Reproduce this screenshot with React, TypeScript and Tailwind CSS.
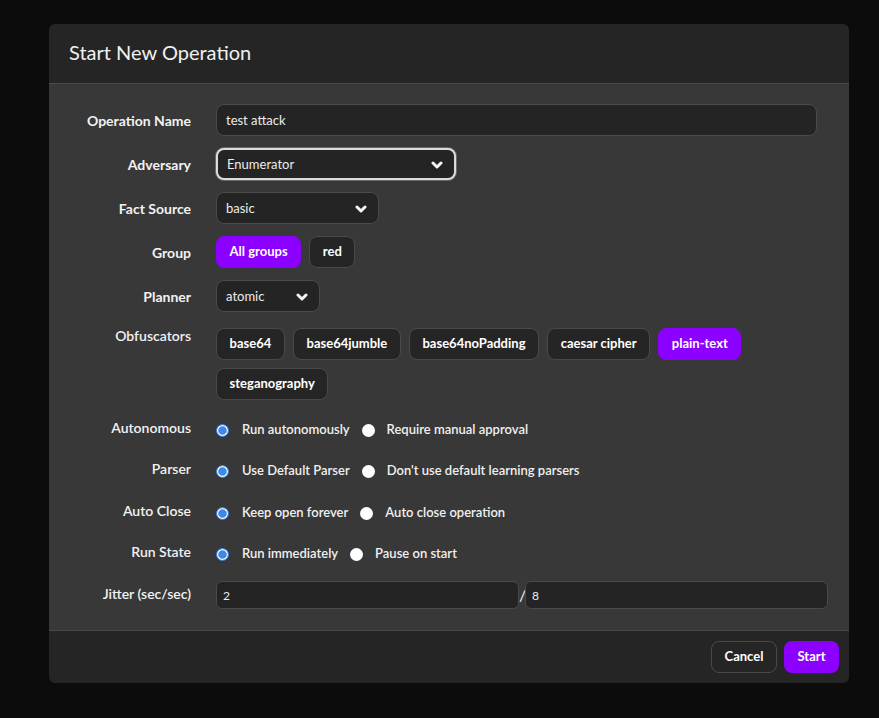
import type { ReactNode } from "react"

const obfuscators = ["base64", "base64jumble", "base64noPadding", "caesar cipher", "plain-text", "steganography"]

const radioRows = [
  { label: "Autonomous", on: "Run autonomously", off: "Require manual approval", gap: "mt-5" },
  { label: "Parser", on: "Use Default Parser", off: "Don't use default learning parsers", gap: "mt-[21px]" },
  { label: "Auto Close", on: "Keep open forever", off: "Auto close operation", gap: "mt-[22px]" },
  { label: "Run State", on: "Run immediately", off: "Pause on start", gap: "mt-[21px]" },
]

function Chevron() {
  return (
    <svg width="12" height="10" viewBox="0 0 12 10" className="shrink-0">
      <path d="M2 3 L6 7 L10 3" fill="none" stroke="#f5f5f5" strokeWidth="3" strokeLinecap="round" strokeLinejoin="round" />
    </svg>
  )
}

function Select({ value, width, focused }: { value: string; width: string; focused?: boolean }) {
  return (
    <div
      className={`${width} h-8 flex items-center justify-between pl-[9px] pr-[11px] pt-[1px] rounded-lg bg-[#242424] text-[13px] text-[#ececec] ${
        focused ? "border-2 border-[#dcdcdc] shadow-[0_0_0_1px_#6a6a6a]" : "border border-[#4a4a4a]"
      }`}
    >
      <span>{value}</span>
      <Chevron />
    </div>
  )
}

function Chip({ children, active }: { children: ReactNode; active?: boolean }) {
  return (
    <div
      className={`h-8 px-[12.6px] flex items-center rounded-lg text-[13px] font-bold text-white ${
        active ? "bg-[#8c00ff] border border-[#8c00ff]" : "bg-[#252525] border border-[#4a4a4a]"
      }`}
    >
      {children}
    </div>
  )
}

function Radio({ checked }: { checked?: boolean }) {
  if (checked)
    return (
      <span className="w-[13px] h-[13px] rounded-full bg-[#3f88e6] border-[1.5px] border-[#3f88e6] shadow-[inset_0_0_0_1.2px_#ffffff] shrink-0" />
    )
  return <span className="w-[13px] h-[13px] rounded-full bg-white shrink-0" />
}

function Label({ children, className = "" }: { children: ReactNode; className?: string }) {
  return <div className={`w-[122px] mr-[25px] text-right text-[14px] font-bold text-[#f2f2f2] shrink-0 ${className}`}>{children}</div>
}

export default function App() {
  return (
    <div className="min-h-screen bg-[#0c0c0c] pt-6 pl-[49px]" style={{ fontFamily: "Lato, 'Noto Sans', sans-serif" }}>
      <div className="w-[800px] rounded-md overflow-hidden">
        <div className="h-[60px] bg-[#252525] border-b border-[#4a4a4a] flex items-center px-5">
          <h1 className="text-[20px] text-[#f0f0f0] pb-[3px]">Start New Operation</h1>
        </div>

        <div className="bg-[#383838] pt-5 pb-[21px] pl-5 pr-[21px] border-b border-[#4a4a4a]">
          <div className="flex items-center h-8">
            <Label>Operation Name</Label>
            <div className="flex-1 mr-[11px] h-8 flex items-center px-[9px] pt-[1px] rounded-lg bg-[#242424] border border-[#4a4a4a] text-[13px] text-[#ececec]">
              test attack
            </div>
          </div>

          <div className="flex items-center h-8 mt-3">
            <Label>Adversary</Label>
            <Select value="Enumerator" width="w-[240px]" focused />
          </div>

          <div className="flex items-center h-8 mt-3">
            <Label>Fact Source</Label>
            <Select value="basic" width="w-[163px]" />
          </div>

          <div className="flex items-center h-8 mt-3">
            <Label>Group</Label>
            <div className="flex gap-2">
              <Chip active>All groups</Chip>
              <Chip>red</Chip>
            </div>
          </div>

          <div className="flex items-center h-8 mt-3">
            <Label>Planner</Label>
            <Select value="atomic" width="w-[104px]" />
          </div>

          <div className="flex items-start mt-4">
            <Label className="font-semibold -mt-[3px]">Obfuscators</Label>
            <div className="flex flex-wrap gap-x-2 gap-y-2 w-[540px]">
              {obfuscators.map((o) => (
                <Chip key={o} active={o === "plain-text"}>
                  {o}
                </Chip>
              ))}
            </div>
          </div>

          {radioRows.map((r) => (
            <div key={r.label} className={`flex items-center h-5 ${r.gap}`}>
              <Label className="font-semibold -mt-[6px]">{r.label}</Label>
              <div className="flex items-center text-[13px] font-semibold text-[#f0f0f0]">
                <Radio checked />
                <span className="ml-[13px]">{r.on}</span>
                <span className="ml-[12px]" />
                <Radio />
                <span className="ml-[12px]">{r.off}</span>
              </div>
            </div>
          ))}

          <div className="flex items-center h-[28px] mt-[17px]">
            <Label className="font-semibold -mt-[3px]">Jitter (sec/sec)</Label>
            <div className="flex-1 flex items-center">
              <div className="flex-1 h-[28px] flex items-center px-[6px] pt-[2px] rounded-md bg-[#242424] border border-[#4a4a4a] text-[12px] text-[#ececec]">
                2
              </div>
              <span className="w-[6px] text-center text-[16px] text-[#f0f0f0]">/</span>
              <div className="flex-1 h-[28px] flex items-center px-[6px] pt-[2px] rounded-md bg-[#242424] border border-[#4a4a4a] text-[12px] text-[#ececec]">
                8
              </div>
            </div>
          </div>
        </div>

        <div className="h-[52px] bg-[#252525] flex items-center justify-end gap-[7px] pr-[10px]">
          <button className="h-8 w-[66px] rounded-lg border border-[#4a4a4a] bg-[#252525] text-[13px] font-bold text-white">
            Cancel
          </button>
          <button className="h-8 w-[55px] rounded-lg bg-[#8c00ff] text-[13px] font-bold text-white">Start</button>
        </div>
      </div>
    </div>
  )
}
